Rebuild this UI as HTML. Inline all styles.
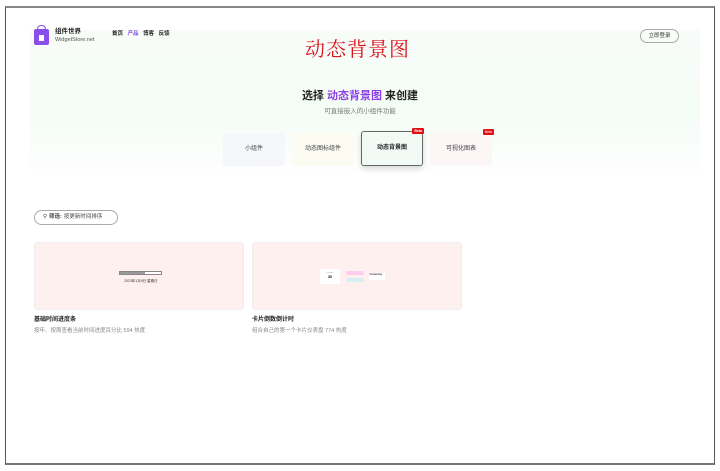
<!DOCTYPE html><html><head><meta charset="utf-8"><style>
*{margin:0;padding:0;box-sizing:border-box}
body{width:720px;height:471px;background:#fff;font-family:"Liberation Sans","Noto Sans CJK SC",sans-serif;position:relative;overflow:hidden;line-height:1.2}
.frame{position:absolute;left:5px;top:6px;width:710px;height:459px;border:1px solid #555;border-bottom:2px solid #777;border-top:2px solid #888}
.bg{position:absolute;left:30px;top:30px;width:670px;height:150px;background:linear-gradient(180deg,#f8fcf8,#f4fcf6 55%,#fff)}
.abs{position:absolute}
.tab{position:absolute;top:133px;width:62px;height:33px;border-radius:3px;font-size:6px;color:#444;display:flex;align-items:center;justify-content:center}
.beta{position:absolute;top:-4px;right:-2px;background:#d11;color:#fff;font-size:3.5px;padding:1px 2px;border-radius:1px}
.card{position:absolute;top:242px;width:210px;height:68px;background:#fdf0ee;border:1px solid #eee;border-radius:3px}
</style></head><body>
<div class="frame"></div>
<div class="bg"></div>
<div class="abs" style="left:34px;top:29px;width:15px;height:16px;background:#8a4fe8;border-radius:2px"></div>
<div class="abs" style="left:37px;top:25px;width:9px;height:7px;border:1.5px solid #8a4fe8;border-bottom:none;border-radius:4px 4px 0 0"></div>
<div class="abs" style="left:39px;top:35px;width:5px;height:6px;background:#fff"></div>
<div class="abs" style="left:55px;top:28px;font-size:6.5px;line-height:8px;font-weight:bold;color:#222">组件世界</div>
<div class="abs" style="left:55px;top:37px;font-size:5.5px;line-height:7px;color:#555">WidgetStore.net</div>
<div class="abs" style="left:112px;top:31px;font-size:5.5px;font-weight:bold;color:#222;word-spacing:3px">首页 <span style="color:#8a4fe8">产品</span> 博客 反馈</div>
<div class="abs" style="left:305px;top:36px;font-size:20px;line-height:24px;color:#d8141c;letter-spacing:1px;font-family:'Noto Serif CJK SC',serif">动态背景图</div>
<div class="abs" style="left:640px;top:29px;width:39px;height:14px;border:1px solid #aaa;border-radius:7px;font-size:5.5px;display:flex;align-items:center;justify-content:center;color:#333">立即登录</div>
<div class="abs" style="left:0;width:720px;top:90px;text-align:center;font-size:11px;font-weight:bold;color:#222">选择 <span style="color:#8a3fe8">动态背景图</span> 来创建</div>
<div class="abs" style="left:0;width:720px;top:108px;text-align:center;font-size:6.5px;color:#777">可直接嵌入的小组件功能</div>
<div class="tab" style="left:223px;background:#f5f7fb">小组件</div>
<div class="tab" style="left:292px;background:#fdfcf3">动态图标组件</div>
<div class="tab" style="left:361px;top:131px;height:35px;background:#f2faf6;border:1px solid #666;box-shadow:0 3px 6px rgba(0,0,0,.15);font-weight:bold;color:#222">动态背景图<span class="beta">Beta</span></div>
<div class="tab" style="left:430px;background:#fdf6f7">可视化图表<span class="beta">Beta</span></div>
<div class="abs" style="left:34px;top:210px;width:84px;height:15px;border:1px solid #aaa;border-radius:8px;font-size:5.5px;color:#444;display:flex;align-items:center;padding-left:8px">⚲ <b style="margin:0 2px">筛选:</b> 按更新时间排序</div>
<div class="card" style="left:34px"><div class="abs" style="left:84px;top:28px;width:43px;height:4px;background:#fff;border:1px solid #888"><div style="width:60%;height:100%;background:#999"></div></div><div class="abs" style="left:89px;top:36px;font-size:3.5px;color:#333">2023年1月9日 星期日</div></div>
<div class="card" style="left:252px"><div class="abs" style="left:67px;top:26px;width:20px;height:15px;background:#fff;font-size:3.5px;text-align:center;padding-top:2px">······<br><b>30</b></div><div class="abs" style="left:93px;top:28px;width:18px;height:4px;background:#fce;border-radius:2px"></div><div class="abs" style="left:93px;top:35px;width:18px;height:4px;background:#d8eef5;border-radius:2px"></div><div class="abs" style="left:116px;top:30px;width:16px;height:7px;background:#fff;font-size:3px">Yesterday</div></div>
<div class="abs" style="left:34px;top:317px;font-size:6px;font-weight:bold;color:#222">基础时间进度条</div>
<div class="abs" style="left:34px;top:328px;font-size:5.5px;color:#888">按年、按周查看当前时间进度百分比 594 热度</div>
<div class="abs" style="left:252px;top:317px;font-size:6px;font-weight:bold;color:#222">卡片倒数倒计时</div>
<div class="abs" style="left:252px;top:328px;font-size:5.5px;color:#888">组合自己的第一个卡片仪表盘 774 热度</div>
</body></html>
